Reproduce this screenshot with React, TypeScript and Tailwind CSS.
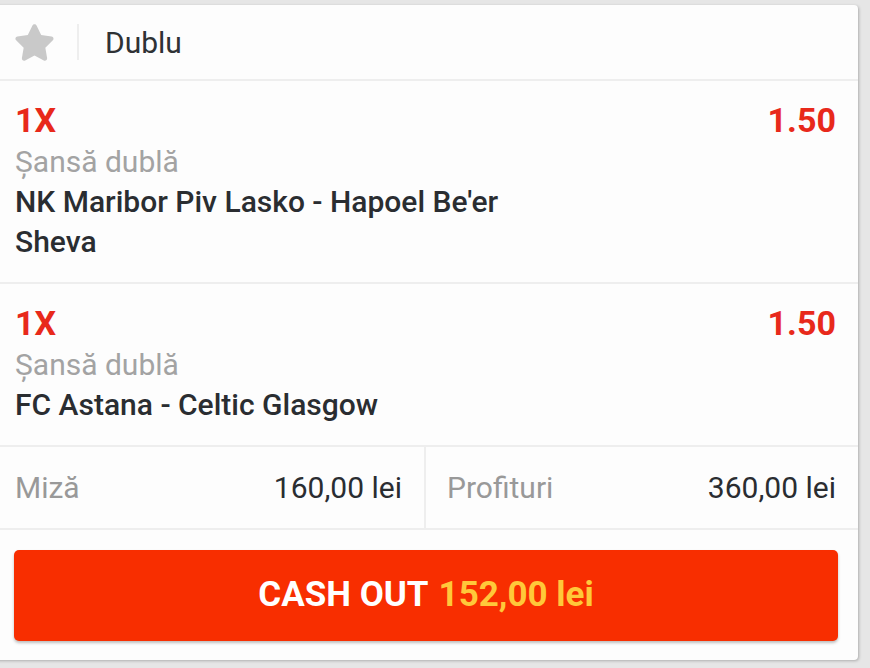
import { FaStar } from 'react-icons/fa';

const Selection = ({ match, odds }: { match: string; odds: string }) => (
  <div className="border-b-2 border-[#eeeeee] pl-[21px] pr-[22px] pt-[19px] pb-[20px]">
    <div className="flex justify-between items-center h-[41px]">
      <span className="text-[34px] font-bold text-[#e8291b]">1X</span>
      <span className="text-[34px] font-bold text-[#e8291b]">{odds}</span>
    </div>
    <div className="text-[30px] leading-[41px] text-[#a3a3a3]">Șansă dublă</div>
    <div className="text-[30px] leading-[40px] font-medium text-[#2a2d31] max-w-[540px]">
      {match}
    </div>
  </div>
);

const App = () => {
  return (
    <div
      className="min-h-[668px] w-[870px] bg-[#e6e6e6] pt-[5px] overflow-hidden"
      style={{ fontFamily: 'Roboto, "Liberation Sans", sans-serif' }}
    >
      <div className="ml-[-6px] w-[864px] bg-[#fdfdfd] rounded-sm shadow-[1px_1px_3px_rgba(0,0,0,0.25)]">
        <div className="flex items-center h-[76px] border-b-2 border-[#eeeeee] pl-[20px]">
          <FaStar size={41} className="text-[#c9c9c9]" />
          <div className="w-[2px] h-[36px] bg-[#eeeeee] ml-[22px]" />
          <span className="ml-[26px] text-[30px] text-[#2f3235]">Dublu</span>
        </div>

        <Selection match="NK Maribor Piv Lasko - Hapoel Be'er Sheva" odds="1.50" />
        <Selection match="FC Astana - Celtic Glasgow" odds="1.50" />

        <div className="grid grid-cols-2 h-[83px] border-b-2 border-[#eeeeee]">
          <div className="flex items-center justify-between pl-[21px] pr-[22px] border-r-2 border-[#eeeeee]">
            <span className="text-[30px] text-[#999999]">Miză</span>
            <span className="text-[30px] text-[#2a2d31]">160,00 lei</span>
          </div>
          <div className="flex items-center justify-between pl-[21px] pr-[22px]">
            <span className="text-[30px] text-[#999999]">Profituri</span>
            <span className="text-[30px] text-[#2a2d31]">360,00 lei</span>
          </div>
        </div>

        <div className="pl-[20px] pr-[20px] pt-[20px] pb-[19px]">
          <button className="w-full h-[91px] rounded-[5px] bg-[#f82e00] shadow-[0_2px_3px_rgba(0,0,0,0.25)] flex items-center justify-center text-[35px] font-bold">
            <span className="text-white">CASH OUT</span>
            <span className="ml-[10px] text-[#ffc83a]">152,00 lei</span>
          </button>
        </div>
      </div>
    </div>
  );
};

export default App;
